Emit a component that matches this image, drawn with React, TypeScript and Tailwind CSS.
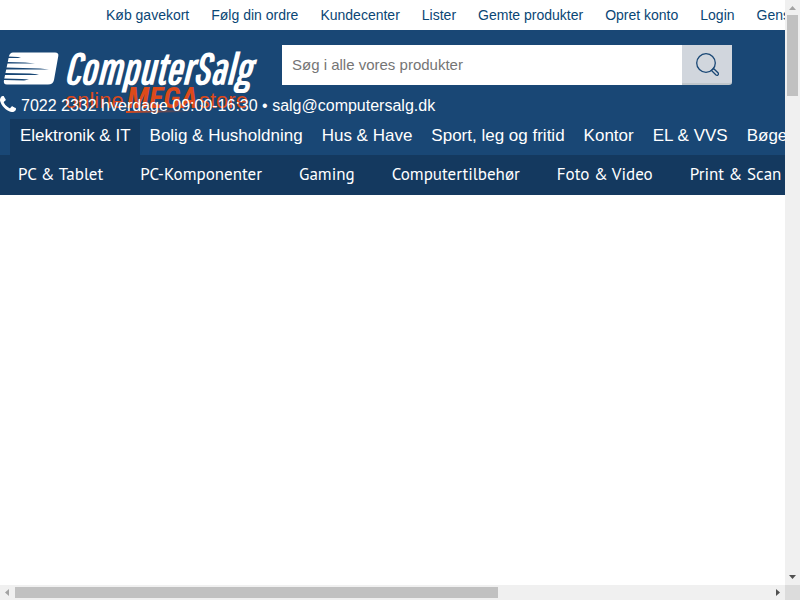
const topLinks = ["Køb gavekort", "Følg din ordre", "Kundecenter", "Lister", "Gemte produkter", "Opret konto", "Login", "Gens"];
const departments = ["Elektronik & IT", "Bolig & Husholdning", "Hus & Have", "Sport, leg og fritid", "Kontor", "EL & VVS", "Bøge"];
const categories = ["PC & Tablet", "PC-Komponenter", "Gaming", "Computertilbehør", "Foto & Video", "Print & Scan"];

function Logo() {
  return (
    <svg className="block h-20 w-[262px]" viewBox="0 0 262 80" role="img" aria-label="ComputerSalg online MEGAstore">
      <defs>
        <linearGradient id="swoosh">
          <stop offset="0" stopColor="#dc4a1b" />
          <stop offset="1" stopColor="#dc4a1b" stopOpacity="0" />
        </linearGradient>
      </defs>
      <path d="M13 7.500H55Q59 7.500 58.300 11L54 35Q53 39.500 48 39.500H7Q3 39.500 4 35L9 11Q10 7.500 13 7.500Z" fill="#fff" />
      <path
        d="M8 11.500L18 12L21 13L8 13ZM7 17L25 17.500L35 18.500L7 18.500ZM6 22.500L40 23.500L49 24.500L6 24.500ZM5 28L30 28.500L39 29.500L36 30L5 30ZM4 33.500L22 34L29 34.500L24 35.500L4 35Z"
        fill="#194775"
      />
      <text
        x="64"
        y="39"
        fontSize="43"
        fontWeight="700"
        fontStyle="italic"
        fill="#fff"
        fontFamily="'Pathway Gothic One', 'Roboto Condensed', 'Liberation Sans', sans-serif"
      >
        ComputerSalg
      </text>
      <g fill="#dc4a1b" fontFamily="'Liberation Sans', Arial, sans-serif">
        <text x="65" y="63" fontSize="22">online</text>
        <text x="127" y="63" fontSize="30" fontWeight="700" fontStyle="italic" fontFamily="'Roboto Condensed', 'Liberation Sans', sans-serif">MEGA</text>
        <text x="199" y="63" fontSize="22">store</text>
      </g>
      <path d="M126 66L190 65L188 67L126 68Z" fill="url(#swoosh)" />
    </svg>
  );
}

function PhoneIcon() {
  return (
    <svg className="mb-1 h-4 w-4" viewBox="0 128 1408 1408" fill="currentColor" aria-hidden="true">
      <path d="M1408 1240q0 27-10 70.500t-21 68.500q-21 50-122 106-94 51-186 51-27 0-52.500-3.500t-57.500-12.500-47.500-14.500-55.500-20.500-49-18q-98-35-175-83-128-79-264.500-215.500t-215.500-264.500q-48-77-83-175-3-9-18-49t-20.500-55.500-14.500-47.500-12.500-57.500-3.500-52.500q0-92 51-186 56-101 106-122 25-11 68.500-21t70.500-10q14 0 21 3 18 6 53 76 11 19 30 54t35 63.500 31 53.500q3 4 17.500 25t21.500 35.500 7 28.500q0 20-28.500 50t-62 55-62 53-28.500 46q0 9 5 22.500t8.500 20.500 14 24 11.500 19q76 137 174 235t235 174q2 1 19 11.500t24 14 20.500 8.500 22.500 5q18 0 46-28.500t53-62 55-62 50-28.500q14 0 28.500 7t35.500 21.500 25 17.500q25 15 53.500 31t63.500 35 54 30q70 35 76 53 3 7 3 21z" />
    </svg>
  );
}

function SearchIcon() {
  return (
    <svg className="h-6 w-6" viewBox="0 0 24 24" fill="none" stroke="#194775" strokeWidth="1.300" aria-hidden="true">
      <circle cx="11" cy="11" r="9.300" />
      <path d="M16.500 18.500L18.500 16.500L23.200 21Q23.800 22 23 22.900Q22 23.700 21 23Z" />
    </svg>
  );
}

export default function App() {
  return (
    <div className="grid h-screen grid-cols-[minmax(0,1fr)_15px] grid-rows-[minmax(0,1fr)_15px] bg-white font-['Liberation_Sans',Arial,sans-serif]">
      <main className="overflow-hidden">
        <nav aria-label="Service" className="flex h-[30px] gap-[22px] pl-[106px] text-sm leading-[30px] whitespace-nowrap text-[#0a4675]">
          {topLinks.map((label) => (
            <a key={label} href="#">{label}</a>
          ))}
        </nav>
        <header className="bg-[#194775] pt-[15px] text-white">
          <div className="flex h-10 gap-5">
            <a href="#" className="shrink-0">
              <Logo />
            </a>
            <form className="flex h-10 w-[450px] shrink-0" onSubmit={(e) => e.preventDefault()}>
              <input
                type="text"
                aria-label="Søg i alle vores produkter"
                placeholder="Søg i alle vores produkter"
                className="min-w-0 flex-1 bg-white px-2.5 text-[15px] text-black outline-none placeholder:text-[#757575]"
              />
              <button
                type="submit"
                aria-label="Søg"
                className="flex w-[50px] items-center justify-center rounded-br-[3px] border-b-2 border-[#bfc6cb] bg-[#d1d6dd]"
              >
                <SearchIcon />
              </button>
            </form>
          </div>
          <p className="relative mt-2.5 flex h-[22px] items-center gap-[5px] text-base leading-[22px] whitespace-nowrap">
            <PhoneIcon />
            <span>7022 2332 hverdage 09:00-16:30 • salg@computersalg.dk</span>
          </p>
          <nav aria-label="Afdelinger" className="mt-0.5 flex pl-2.5 text-[17px] leading-[34px] whitespace-nowrap">
            {departments.map((label, i) => (
              <a key={label} href="#" className={`pr-[9px] pb-0.5 pl-2.5 ${i === 0 ? "bg-[#14395f]" : ""}`}>
                {label}
              </a>
            ))}
          </nav>
        </header>
        <nav
          aria-label="Kategorier"
          className="flex h-10 bg-[#14395f] font-['PT_Sans','Noto_Sans',sans-serif] text-[17px] leading-[38px] whitespace-nowrap text-white"
        >
          {categories.map((label) => (
            <a key={label} href="#" className="pr-[19px] pl-[18px]">{label}</a>
          ))}
        </nav>
      </main>
      <div className="flex flex-col items-center bg-[#f0f0f0]" aria-hidden="true">
        <svg className="h-[15px] w-[15px] shrink-0" viewBox="0 0 15 15"><path d="M4 10H11L7.500 6Z" fill="#a3a3a3" /></svg>
        <div className="h-[81px] w-[11px] bg-[#c1c1c1]" />
        <svg className="mt-auto h-[15px] w-[15px] shrink-0" viewBox="0 0 15 15"><path d="M4 5H11L7.500 9Z" fill="#505050" /></svg>
      </div>
      <div className="flex items-center bg-[#f0f0f0]" aria-hidden="true">
        <svg className="h-[15px] w-[15px] shrink-0" viewBox="0 0 15 15"><path d="M9 4V11L5 7.500Z" fill="#a3a3a3" /></svg>
        <div className="flex flex-1">
          <div className="h-[11px] w-[64%] bg-[#c1c1c1]" />
        </div>
        <svg className="h-[15px] w-[15px] shrink-0" viewBox="0 0 15 15"><path d="M6 4V11L10 7.500Z" fill="#505050" /></svg>
      </div>
      <div className="bg-[#dcdcdc]" />
    </div>
  );
}
